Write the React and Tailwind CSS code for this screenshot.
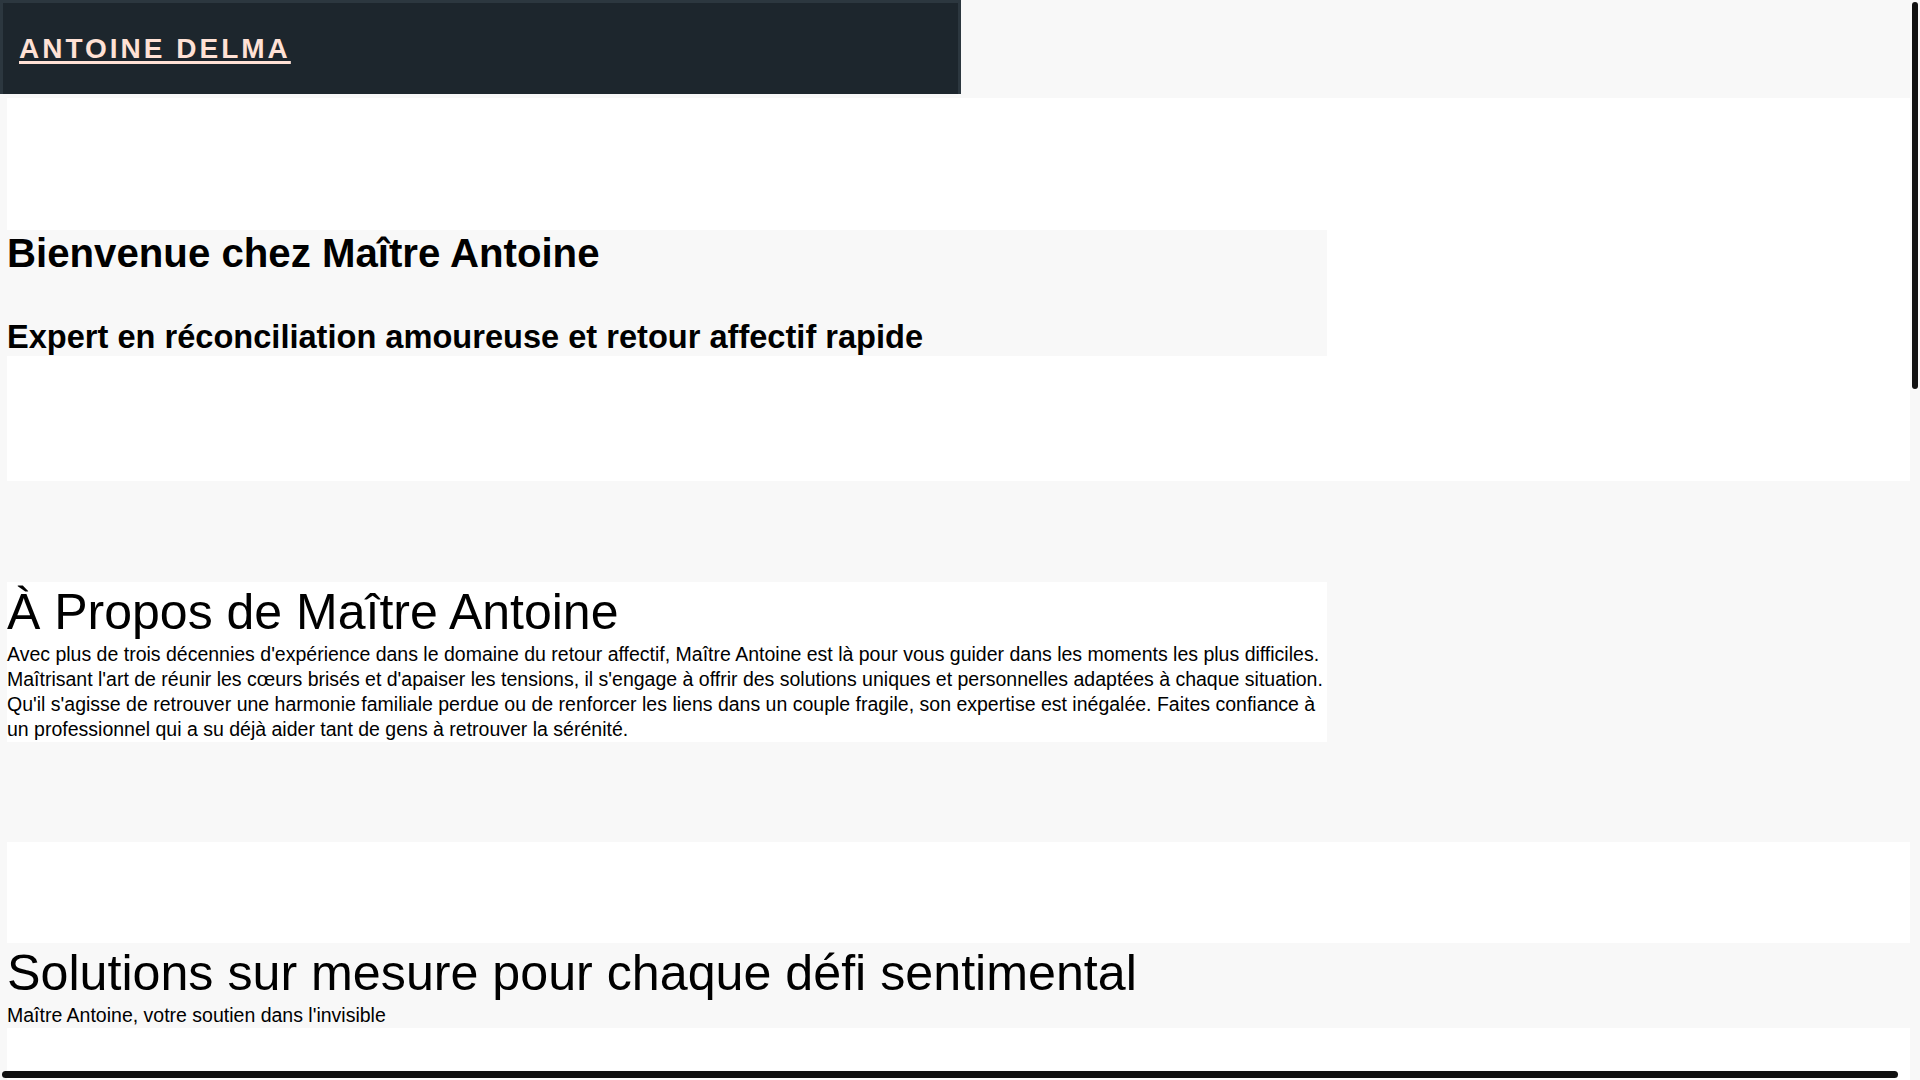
import React from 'react';

const font = { fontFamily: '"Liberation Sans", Arial, sans-serif' };

const Header = () => (
  <header className="flex h-[94px] w-[961px] items-center border-x-[3px] border-t-[3px] border-[#2c373f] bg-[#1d262d] pl-4">
    <a
      href="#"
      className="text-[28px] leading-none font-bold tracking-[3px] text-[#ffe1d5] underline decoration-[2.5px] underline-offset-[3px]"
    >
      ANTOINE DELMA
    </a>
  </header>
);

const App = () => {
  return (
    <div className="relative h-screen w-full overflow-hidden bg-[#f8f8f8] text-black" style={font}>
      <Header />

      <main className="mt-1 ml-[7px] w-[1903px]">
        {/* Hero */}
        <section className="bg-white pt-[132px] pb-[125px]">
          <div className="w-[1320px] bg-[#f8f8f8]">
            <h1 className="text-[40.2px] leading-[1.2] font-bold">Bienvenue chez Maître Antoine</h1>
            <h2 className="mt-10 text-[32.6px] leading-[1.16] font-bold">
              Expert en réconciliation amoureuse et retour affectif rapide
            </h2>
          </div>
        </section>

        {/* A propos */}
        <section className="bg-[#f8f8f8] pt-[101px] pb-[100px]">
          <div className="w-[1320px] bg-white">
            <h2 className="text-[50px] leading-[1.2] font-normal">À Propos de Maître Antoine</h2>
            <p className="text-[19.5px] leading-[25px]">
              Avec plus de trois décennies d'expérience dans le domaine du retour affectif, Maître Antoine est là pour
              vous guider dans les moments les plus difficiles. Maîtrisant l'art de réunir les cœurs brisés et
              d'apaiser les tensions, il s'engage à offrir des solutions uniques et personnelles adaptées à chaque
              situation. Qu'il s'agisse de retrouver une harmonie familiale perdue ou de renforcer les liens dans un
              couple fragile, son expertise est inégalée. Faites confiance à un professionnel qui a su déjà aider tant
              de gens à retrouver la sérénité.
            </p>
          </div>
        </section>

        {/* Services */}
        <section className="bg-white pt-[101px] pb-[200px]">
          <div className="bg-[#f8f8f8]">
            <h2 className="text-[50.2px] leading-[1.2] font-normal">Solutions sur mesure pour chaque défi sentimental</h2>
            <p className="text-[19.5px] leading-[25px]">Maître Antoine, votre soutien dans l'invisible</p>
          </div>
        </section>
      </main>

      {/* scrollbars */}
      <div className="absolute top-[2px] right-[2px] h-[387px] w-[6px] rounded-full bg-[#111]" />
      <div className="absolute bottom-[2px] left-[2px] h-[7px] w-[1896px] rounded-full bg-[#111]" />
    </div>
  );
};

export default App;
